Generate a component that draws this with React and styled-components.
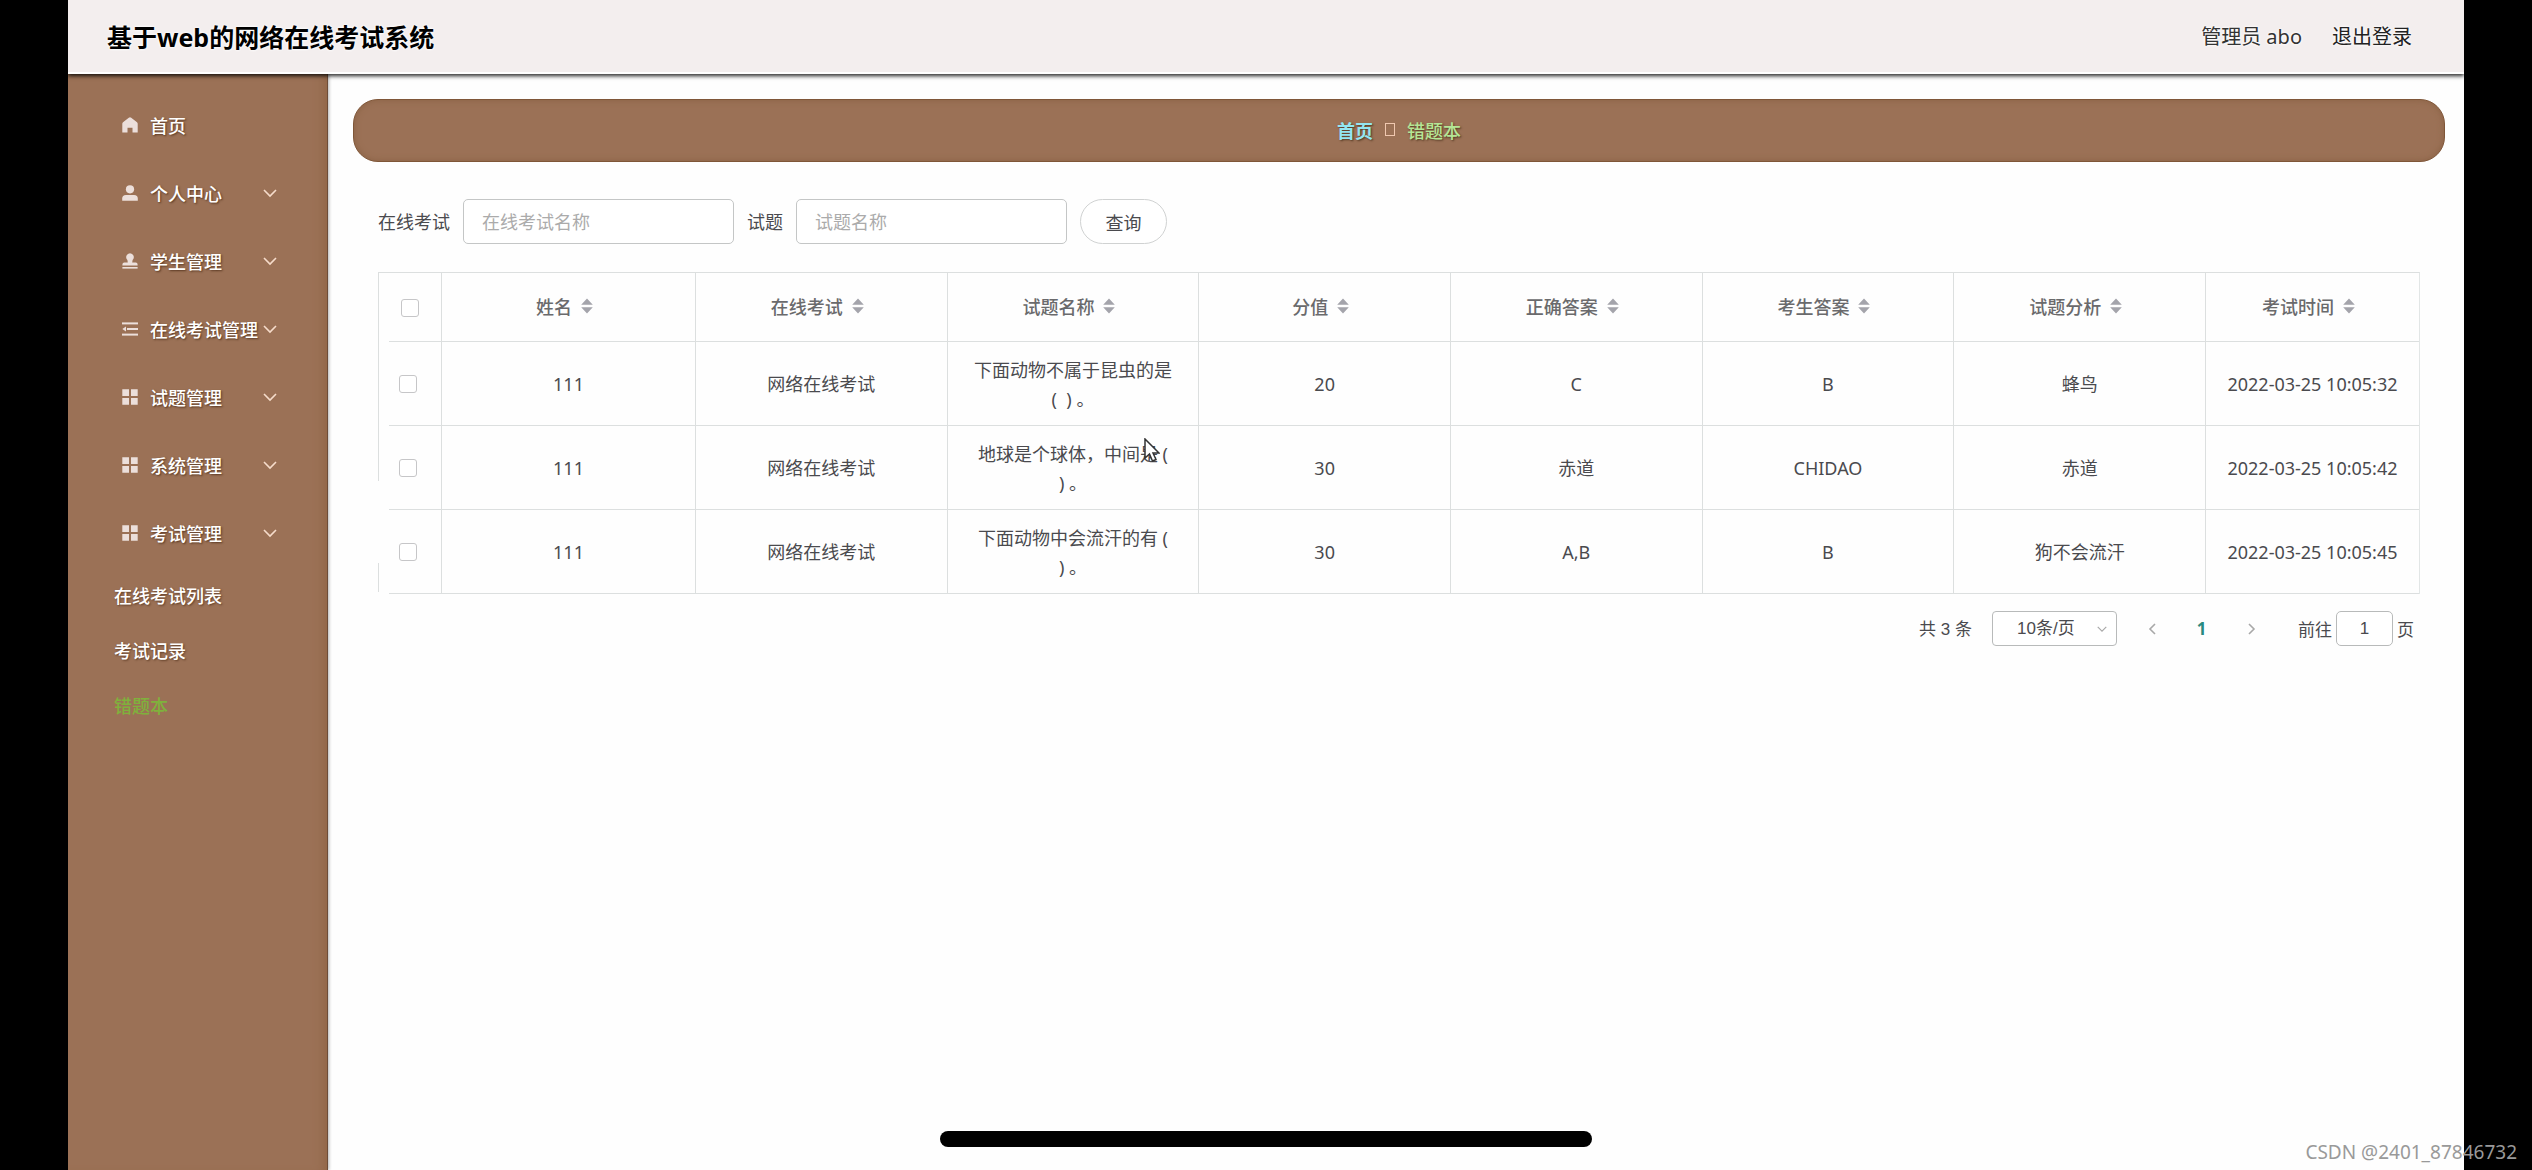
import React, { useState } from 'react';
import styled, { createGlobalStyle } from 'styled-components';

const menuItems = [
  { label: '首页', icon: 'home' },
  { label: '个人中心', icon: 'user', expandable: true },
  { label: '学生管理', icon: 'stamp', expandable: true },
  { label: '在线考试管理', icon: 'fold', expandable: true },
  { label: '试题管理', icon: 'grid', expandable: true },
  { label: '系统管理', icon: 'grid', expandable: true },
  { label: '考试管理', icon: 'grid', expandable: true },
];

const subItems = ['在线考试列表', '考试记录', '错题本'];

const columns = ['姓名', '在线考试', '试题名称', '分值', '正确答案', '考生答案', '试题分析', '考试时间'];

const rows = [
  { name: '111', exam: '网络在线考试', question: ['下面动物不属于昆虫的是', '(  ) 。'], score: '20', right: 'C', answer: 'B', analysis: '蜂鸟', time: '2022-03-25 10:05:32', edge: [0, 84] },
  { name: '111', exam: '网络在线考试', question: ['地球是个球体，中间是 (', ') 。'], score: '30', right: '赤道', answer: 'CHIDAO', analysis: '赤道', time: '2022-03-25 10:05:42', edge: [0, 55] },
  { name: '111', exam: '网络在线考试', question: ['下面动物中会流汗的有 (', ') 。'], score: '30', right: 'A,B', answer: 'B', analysis: '狗不会流汗', time: '2022-03-25 10:05:45', edge: [53, 82] },
];

const MenuIcon = ({ name }) => (
  <IconSvg viewBox="0 0 16 16" aria-hidden="true">
    {name === 'home' && <path d="M8 0.3Q8.6 0.3 9.2 0.8L15 5.2Q15.7 5.8 15.7 6.8V15.6H10.5V10.8H5.5V15.6H0.3V6.8Q0.3 5.8 1 5.2L6.8 0.8Q7.4 0.3 8 0.3Z" />}
    {name === 'user' && (
      <>
        <circle cx="8" cy="4.3" r="4.1" />
        <path d="M0.2 15.8V13.4Q0.2 9.9 4 9.9H12Q15.8 9.9 15.8 13.4V15.8Z" />
      </>
    )}
    {name === 'stamp' && (
      <>
        <path d="M8 0.3A3.9 3.9 0 0 1 10.6 7L10.2 9.4H13.6Q15.6 9.4 15.6 11.4V12.4H0.4V11.4Q0.4 9.4 2.4 9.4H5.8L5.4 7A3.9 3.9 0 0 1 8 0.3Z" />
        <rect x="0.4" y="14" width="15.2" height="1.6" />
      </>
    )}
    {name === 'fold' && (
      <>
        <rect x="0" y="1.4" width="16" height="2" />
        <rect x="5" y="7" width="11" height="2" />
        <rect x="0" y="12.6" width="16" height="2" />
        <path d="M0.3 8 4 5.5V10.5Z" />
      </>
    )}
    {name === 'grid' && <path d="M0.3 0.3H7V7H0.3ZM9 0.3H15.7V7H9ZM0.3 9H7V15.7H0.3ZM9 9H15.7V15.7H9Z" />}
  </IconSvg>
);

const Chevron = ({ points = '1,3 7,9 13,3' }) => (
  <ChevronSvg viewBox="0 0 14 12" aria-hidden="true">
    <polyline points={points} />
  </ChevronSvg>
);

const SortIcon = () => (
  <SortSvg viewBox="0 0 12 16" aria-hidden="true">
    <path d="M6 0.5 11.8 6.8H0.2ZM6 15.5 11.8 9.2H0.2Z" />
  </SortSvg>
);

const App = () => {
  const [activeSub, setActiveSub] = useState('错题本');
  const [checked, setChecked] = useState([]);
  const [exam, setExam] = useState('');
  const [question, setQuestion] = useState('');
  const [page, setPage] = useState('1');

  const toggle = index =>
    setChecked(checked.includes(index) ? checked.filter(i => i !== index) : [...checked, index]);
  const toggleAll = () => setChecked(checked.length === rows.length ? [] : rows.map((_, i) => i));

  return (
    <Screen>
      <GlobalStyle />
      <Header>
        <Title>基于web的网络在线考试系统</Title>
        <UserBar>
          <span>管理员 abo</span>
          <LogoutLink href="#logout">退出登录</LogoutLink>
        </UserBar>
      </Header>

      <Body>
        <Sidebar>
          {menuItems.map(item => (
            <MenuItem key={item.label} type="button">
              <MenuIcon name={item.icon} />
              <MenuLabel>{item.label}</MenuLabel>
              {item.expandable && <Chevron />}
            </MenuItem>
          ))}
          {subItems.map(label => (
            <SubItem key={label} type="button" $active={activeSub === label} onClick={() => setActiveSub(label)}>
              {label}
            </SubItem>
          ))}
        </Sidebar>

        <Main>
          <Breadcrumb>
            <CrumbLink href="#home">首页</CrumbLink>
            <CrumbSeparator />
            <CrumbCurrent>错题本</CrumbCurrent>
          </Breadcrumb>

          <Content>
            <SearchForm onSubmit={e => e.preventDefault()}>
              <FieldLabel htmlFor="exam">在线考试</FieldLabel>
              <SearchInput id="exam" placeholder="在线考试名称" value={exam} onChange={e => setExam(e.target.value)} />
              <FieldLabel htmlFor="question">试题</FieldLabel>
              <SearchInput id="question" placeholder="试题名称" value={question} onChange={e => setQuestion(e.target.value)} />
              <SearchButton type="submit">查询</SearchButton>
            </SearchForm>

            <Table>
              <colgroup>
                <CheckCol />
                <NameCol />
                <col /><col /><col /><col /><col /><col />
                <TimeCol />
              </colgroup>
              <thead>
                <tr>
                  <CheckHead>
                    <Checkbox type="checkbox" aria-label="全选" checked={checked.length === rows.length} onChange={toggleAll} />
                  </CheckHead>
                  {columns.map(label => (
                    <HeadCell key={label}>
                      <HeadLabel>
                        {label}
                        <SortIcon />
                      </HeadLabel>
                    </HeadCell>
                  ))}
                </tr>
              </thead>
              <tbody>
                {rows.map((row, index) => (
                  <tr key={row.time}>
                    <CheckCell $edge={row.edge}>
                      <Checkbox type="checkbox" aria-label={row.time} checked={checked.includes(index)} onChange={() => toggle(index)} />
                    </CheckCell>
                    <Cell>{row.name}</Cell>
                    <Cell>{row.exam}</Cell>
                    <Cell>{row.question.map(line => <Line key={line}>{line}</Line>)}</Cell>
                    <Cell>{row.score}</Cell>
                    <Cell>{row.right}</Cell>
                    <Cell>{row.answer}</Cell>
                    <Cell>{row.analysis}</Cell>
                    <Cell>{row.time}</Cell>
                  </tr>
                ))}
              </tbody>
            </Table>

            <Pagination>
              <Total>共 3 条</Total>
              <SelectWrap>
                <PageSize aria-label="每页条数" defaultValue="10">
                  <option value="10">10条/页</option>
                  <option value="20">20条/页</option>
                </PageSize>
                <Chevron />
              </SelectWrap>
              <PagerButton type="button" aria-label="上一页"><Chevron points="9,1 4,6 9,11" /></PagerButton>
              <PagerButton type="button" $current>1</PagerButton>
              <PagerButton type="button" aria-label="下一页"><Chevron points="5,1 10,6 5,11" /></PagerButton>
              <Jumper>
                前往
                <PageInput value={page} onChange={e => setPage(e.target.value)} />
                页
              </Jumper>
            </Pagination>
          </Content>
        </Main>
      </Body>

      <Pointer viewBox="0 0 16 24" aria-hidden="true">
        <path d="M1 1V20L5.5 16 8.5 23 12 21.5 9 15H15Z" />
      </Pointer>
      <HomeIndicator />
      <Watermark>CSDN @2401_87846732</Watermark>
    </Screen>
  );
};

const GlobalStyle = createGlobalStyle`
  * {
    box-sizing: border-box;
  }

  body {
    margin: 0;
    background: #000;
    font-family: 'Noto Sans', 'Noto Sans CJK SC', sans-serif;
    font-size: 18px;
    color: #4a4a4e;
  }

  button, input, select {
    font: inherit;
    color: inherit;
  }
`;

const Screen = styled.div`
  position: relative;
  min-height: 100vh;
  padding: 0 68px;
  display: flex;
  flex-direction: column;
  overflow: hidden;
`;

const Header = styled.header`
  height: 74px;
  padding: 2px 52px 0 39px;
  display: flex;
  align-items: center;
  justify-content: space-between;
  background: #f3eeee;
  border-bottom: 2px solid #fff;
  box-shadow: 0 2px 4px rgba(0, 0, 0, 0.85);
  z-index: 1;
  clip-path: inset(0 0 -10px 0);
`;

const Title = styled.h1`
  margin: 0;
  font-size: 25px;
  line-height: 36px;
  font-weight: 700;
  color: #000;
  text-shadow: 0 0 3px #fff, 0 0 3px #fff;
`;

const UserBar = styled.div`
  display: flex;
  gap: 30px;
  font-size: 20px;
  line-height: 28px;
  color: #333;
  text-shadow: 0 0 3px #fff, 0 0 3px #fff;
`;

const LogoutLink = styled.a`
  color: #222;
  text-decoration: none;
`;

const Body = styled.div`
  flex: 1;
  display: flex;
  background: #fefefe;
`;

const Sidebar = styled.nav`
  width: 260px;
  flex-shrink: 0;
  padding-top: 17px;
  display: flex;
  flex-direction: column;
  background: #9b7156;
  border-right: 1px solid #6d4c38;
  box-shadow: inset -10px 0 10px -6px #936748, 1px 0 3px rgba(0, 0, 0, 0.3);
`;

const MenuItem = styled.button`
  height: 68px;
  padding: 0 50px 0 54px;
  display: flex;
  align-items: center;
  border: 0;
  background: none;
  color: #fff;
  text-align: left;
  cursor: pointer;
  text-shadow: 1px 1px 2px rgba(60, 30, 10, 0.7);

  > svg:last-child:not(:first-child) {
    stroke: #f6dccb;
  }
`;

const MenuLabel = styled.span`
  flex: 1;
  margin-left: 12px;
  white-space: nowrap;
  font-weight: 500;
`;

const SubItem = styled.button`
  height: 55px;
  padding: 0 0 0 46px;
  border: 0;
  background: none;
  text-align: left;
  font-weight: 500;
  color: ${props => props.$active ? '#7fb13c' : '#fff'};
  cursor: pointer;
  text-shadow: ${props => props.$active ? 'none' : '1px 1px 2px rgba(60, 30, 10, 0.6)'};
`;

const IconSvg = styled.svg`
  width: 16px;
  height: 16px;
  flex-shrink: 0;
  fill: #ecdfdb;
`;

const ChevronSvg = styled.svg`
  width: 14px;
  height: 12px;
  flex-shrink: 0;
  fill: none;
  stroke: #a8a8a8;
  stroke-width: 1.6;
`;

const Main = styled.main`
  flex: 1;
  min-width: 0;
  padding: 25px 19px 0 25px;
`;

const Breadcrumb = styled.div`
  height: 63px;
  padding-bottom: 2px;
  display: flex;
  align-items: center;
  justify-content: center;
  gap: 12px;
  border-radius: 25px;
  background: #9b7156;
  border: 1px solid #7f5638;
  box-shadow: inset 0 0 6px #8a6244;
  text-shadow: 1px 1px 2px rgba(50, 30, 10, 0.7);
`;

const CrumbLink = styled.a`
  color: #93e6f2;
  font-weight: 700;
  text-decoration: none;
`;

const CrumbSeparator = styled.span`
  width: 10px;
  height: 13px;
  border: 1px solid #f0c8b0;
`;

const CrumbCurrent = styled.span`
  color: #b5e696;
  font-weight: 500;
`;

const Content = styled.section`
  padding: 37px 25px 0;
`;

const SearchForm = styled.form`
  display: flex;
  align-items: center;
`;

const FieldLabel = styled.label`
  margin-right: 13px;
  padding-bottom: 2px;
`;

const SearchInput = styled.input`
  width: 271px;
  height: 45px;
  margin-right: 13px;
  padding: 0 18px;
  border: 1px solid #c4c6c6;
  border-radius: 5px;
  background: #fff;
  outline: none;

  &::placeholder {
    color: #ababab;
    opacity: 1;
  }
`;

const SearchButton = styled.button`
  width: 87px;
  height: 45px;
  border: 1px solid #d0d2d2;
  border-radius: 23px;
  background: #fff;
  cursor: pointer;
`;

const Table = styled.table`
  width: 100%;
  margin-top: 28px;
  table-layout: fixed;
  border-collapse: separate;
  border-spacing: 0;
  border-top: 1px solid #dcdfdf;
  border-right: 1px solid #e2e6e6;
`;

const CheckCol = styled.col`
  width: 64px;
`;

const NameCol = styled.col`
  width: 254px;
`;

const TimeCol = styled.col`
  width: 213px;
`;

const Cell = styled.td`
  height: 84px;
  padding: 2px 18px 0;
  line-height: 29px;
  text-align: center;
  border-right: 1px solid #dcdfdf;
  border-bottom: 1px solid #dcdfdf;

  &:last-child {
    padding: 2px 0 0;
    border-right: 0;
  }
`;

const HeadCell = styled.th`
  height: 69px;
  padding: 0;
  font-weight: 500;
  color: #6a6a6c;
  border-right: 1px solid #dcdfdf;
  border-bottom: 1px solid #dcdfdf;

  &:last-child {
    border-right: 0;
  }
`;

const HeadLabel = styled.div`
  padding: 0 8px 2px 0;
  display: flex;
  align-items: center;
  justify-content: center;
  gap: 9px;
`;

const CheckHead = styled(HeadCell)`
  border-bottom: 0;
  background:
    linear-gradient(#dcdfdf, #dcdfdf) 0 0 / 1px 100% no-repeat,
    linear-gradient(#dcdfdf, #dcdfdf) 11px 100% / 100% 1px no-repeat;
`;

const CheckCell = styled(Cell)`
  padding: 0 4px 0 0;
  border-bottom: 0;
  background:
    linear-gradient(#dcdfdf, #dcdfdf) 0 ${props => props.$edge[0]}px / 1px ${props => props.$edge[1] - props.$edge[0]}px no-repeat,
    linear-gradient(#dcdfdf, #dcdfdf) 11px 100% / 100% 1px no-repeat;
`;

const Line = styled.div`
  white-space: pre;
`;

const Checkbox = styled.input`
  appearance: none;
  display: block;
  width: 18px;
  height: 18px;
  margin: 0 auto;
  border: 1px solid #c6c6c8;
  border-radius: 3px;
  background: #fff;

  &:checked {
    background: #9b7156;
  }
`;

const SortSvg = styled.svg`
  width: 12px;
  height: 16px;
  fill: #a4a4ab;
`;

const Pagination = styled.div`
  margin-top: 17px;
  padding-right: 6px;
  display: flex;
  align-items: center;
  justify-content: flex-end;
  font-family: 'Liberation Sans', 'Noto Sans CJK SC', sans-serif;
  font-size: 17px;
`;

const Total = styled.span`
  margin-right: 20px;
  padding-bottom: 2px;
`;

const SelectWrap = styled.div`
  position: relative;
  margin-right: 11px;

  > svg {
    position: absolute;
    right: 10px;
    top: 13px;
    width: 10px;
    height: 10px;
    pointer-events: none;
  }
`;

const PageSize = styled.select`
  appearance: none;
  display: block;
  width: 125px;
  height: 35px;
  padding: 0 0 0 24px;
  border: 1px solid #b8baba;
  border-radius: 4px;
  background: #fff;
`;

const PagerButton = styled.button`
  width: 49px;
  height: 34px;
  padding: 0;
  border: 0;
  background: none;
  font-family: 'Noto Sans', sans-serif;
  font-weight: 700;
  color: ${props => props.$current ? '#2a8a80' : '#999'};
  cursor: pointer;
`;

const Jumper = styled.label`
  margin-left: 23px;
  display: flex;
  align-items: center;
  gap: 4px;
`;

const PageInput = styled.input`
  width: 57px;
  height: 35px;
  padding: 0;
  border: 1px solid #b8baba;
  border-radius: 5px;
  background: #fff;
  text-align: center;
`;

const Pointer = styled.svg`
  position: absolute;
  left: 1144px;
  top: 438px;
  width: 16px;
  height: 24px;
  fill: #fff;
  stroke: #333;
  stroke-width: 1.5;
  pointer-events: none;
`;

const HomeIndicator = styled.div`
  position: absolute;
  left: 50%;
  bottom: 23px;
  width: 652px;
  height: 16px;
  border-radius: 8px;
  background: #000;
  transform: translateX(-50%);
`;

const Watermark = styled.div`
  position: absolute;
  right: 15px;
  bottom: 6px;
  font-size: 19px;
  line-height: 24px;
  color: #999;
`;

export default App;
